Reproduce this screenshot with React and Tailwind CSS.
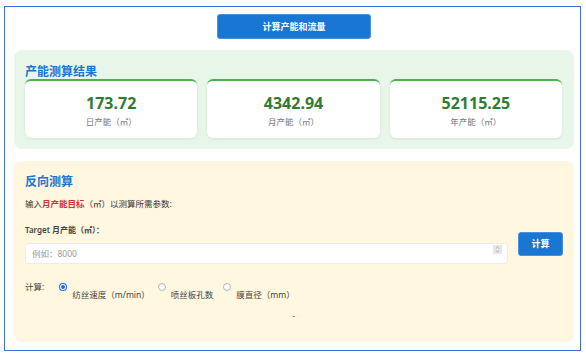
const font = { fontFamily: '"Noto Sans", "Noto Sans CJK SC", sans-serif' };

const results = [
  { value: "173.72", label: "日产能（㎡）" },
  { value: "4342.94", label: "月产能（㎡）" },
  { value: "52115.25", label: "年产能（㎡）" },
];

const options = [
  { label: "纺丝速度（m/min）", checked: true, ml: "ml-[15px]" },
  { label: "喷丝板孔数", checked: false, ml: "ml-[8px]" },
  { label: "膜直径（mm）", checked: false, ml: "ml-[10px]" },
];

const Radio = ({ checked }) =>
  checked ? (
    <span className="flex h-[8px] w-[8px] items-center justify-center rounded-full bg-[#1a6ee8]">
      <span className="block h-[4px] w-[4px] rounded-full bg-[#1a6ee8] ring-1 ring-white" />
    </span>
  ) : (
    <span className="block h-[8px] w-[8px] rounded-full border border-[#b5b5b5] bg-white" />
  );

const App = () => {
  return (
    <div className="min-h-screen bg-white" style={font}>
      <div className="ml-[4px] mt-[6px] h-[345px] w-[577px] border border-[#3d6fd6] pl-[9px] pt-[7px]">
        <div className="flex w-[560px] justify-center">
          <button className="h-[25px] w-[154px] rounded-[3px] border border-[#4a8fe0] bg-[#1976d2] text-[9px] font-bold text-white">
            计算产能和流量
          </button>
        </div>

        <div className="mt-[11px] h-[99px] w-[560px] rounded-[8px] bg-[#e8f5e9] pl-[11px] pt-[15px]">
          <h2 className="text-[12px] font-bold leading-[14px] text-[#1976d2]">产能测算结果</h2>
          <div className="grid w-[537px] grid-cols-3 gap-[10px]">
            {results.map((r, i) => (
              <div
                key={i}
                className="flex h-[59px] flex-col items-center rounded-[6px] border-t-2 border-[#4caf50] bg-white pt-[12px] shadow-[0_1px_3px_rgba(0,0,0,0.08)]"
              >
                <span className="text-[16px] font-bold leading-[20px] text-[#2e7d32]">{r.value}</span>
                <span className="mt-[3px] text-[8.5px] leading-[12px] text-[#777]">{r.label}</span>
              </div>
            ))}
          </div>
        </div>

        <div className="mt-[12px] h-[181px] w-[560px] rounded-[8px] bg-[#fff7df] pl-[11px] pr-[11px] pt-[14px]">
          <h2 className="text-[12px] font-bold leading-[14px] text-[#1976d2]">反向测算</h2>
          <p className="mt-[9px] text-[8.5px] leading-[12px] text-[#333]">
            输入<span className="font-bold text-[#d32f2f]">月产能目标</span>（㎡）以测算所需参数:
          </p>

          <div className="mt-[14px] flex items-center gap-[10px]">
            <div className="flex-1">
              <label className="block text-[8px] font-semibold leading-[12px] text-[#444]">
                Target 月产能（㎡）：
              </label>
              <div className="relative mt-[3px]">
                <input
                  type="text"
                  placeholder="例如：8000"
                  className="h-[21px] w-full rounded-[3px] border border-[#ececec] bg-white pl-[6px] text-[8.5px] text-[#333] outline-none placeholder:text-[#999]"
                />
                <span className="absolute right-[6px] top-[6px] flex h-[9px] w-[9px] flex-col items-center justify-center bg-[#e8e8e8]">
                  <svg width="5" height="7" viewBox="0 0 5 7" fill="none" stroke="#999" strokeWidth="0.8">
                    <path d="M0.8 2.6 L2.5 1 L4.2 2.6" />
                    <path d="M0.8 4.4 L2.5 6 L4.2 4.4" />
                  </svg>
                </span>
              </div>
            </div>
            <button className="h-[24px] w-[45px] rounded-[3px] border border-[#4a8fe0] bg-[#1976d2] text-[9px] font-bold text-white">
              计算
            </button>
          </div>

          <div className="mt-[17px] flex items-start text-[8.5px] leading-[12px] text-[#444]">
            <span>计算:</span>
            {options.map((o, i) => (
              <div key={i} className={`flex items-start ${o.ml}`}>
                <span className="mt-[2px] block">
                  <Radio checked={o.checked} />
                </span>
                <span className="ml-[5px] mt-[8px]">{o.label}</span>
              </div>
            ))}
          </div>

          <p className="mt-[9px] text-center text-[9px] leading-[12px] text-[#e53935]">-</p>
        </div>
      </div>
    </div>
  );
};

export default App;
